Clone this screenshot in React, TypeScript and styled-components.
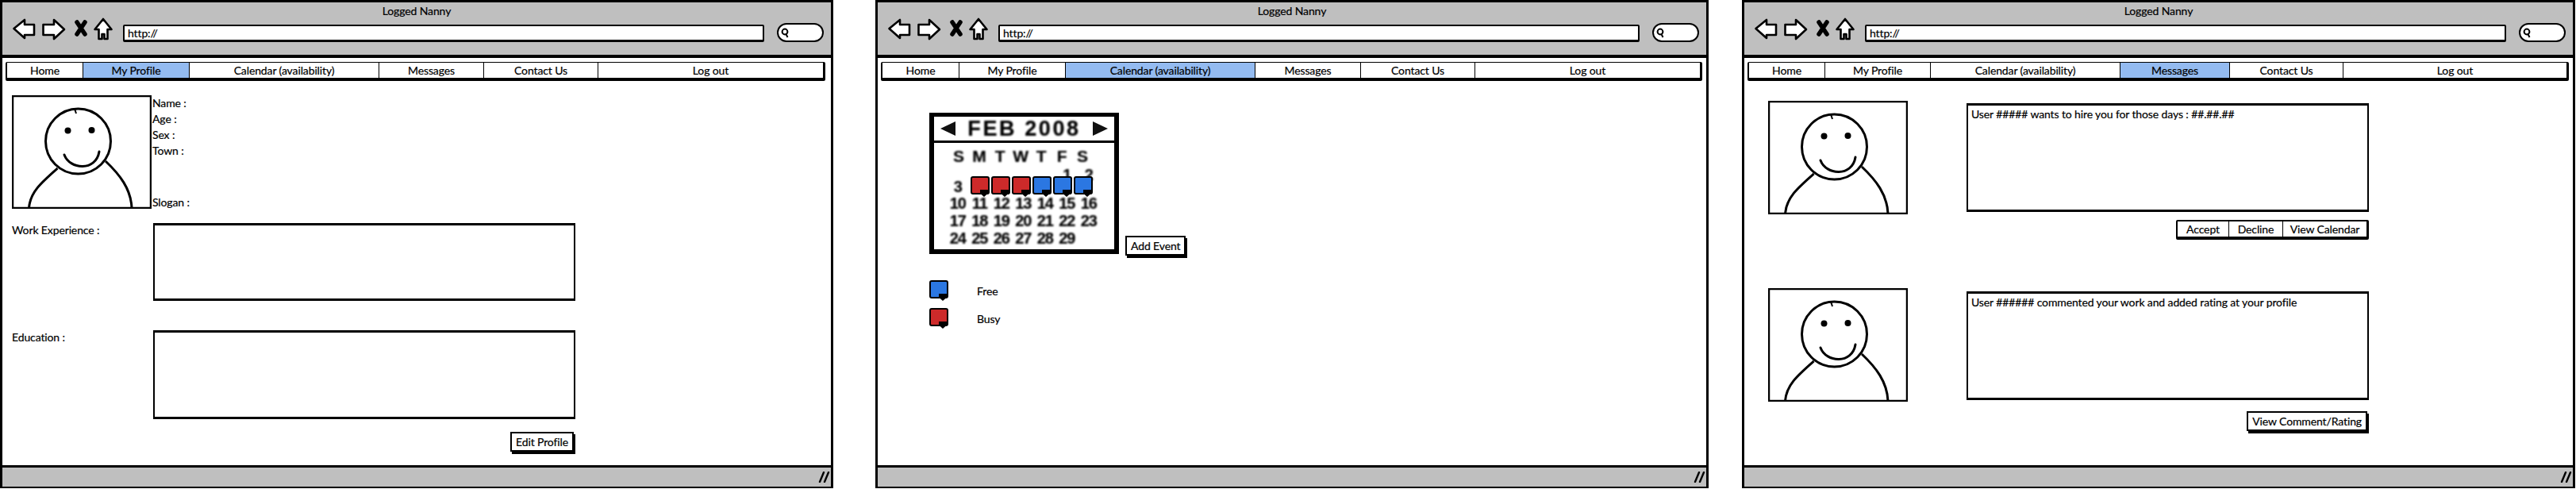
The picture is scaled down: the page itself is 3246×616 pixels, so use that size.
import React from 'react';
import styled, { createGlobalStyle } from 'styled-components';

const GlobalStyle = createGlobalStyle`
  html, body {
    margin: 0;
    padding: 0;
    background: #fff;
    overflow: hidden;
  }
  body {
    font-family: Lato, "Open Sans", sans-serif;
    font-size: 14px;
    letter-spacing: -0.12px;
    -webkit-text-stroke: 0.2px #000;
    color: #000;
  }
`;

const Page = styled.div`
  display: flex;
  width: 3246px;
  height: 616px;
  background: #fff;
`;

const Frame = styled.section<{ $shift: number }>`
  display: flex;
  flex-direction: column;
  flex: none;
  box-sizing: border-box;
  width: 1050px;
  height: 615px;
  margin-left: ${p => p.$shift}px;
  border: 3px solid #000;
  border-bottom-width: 2px;
`;

const TitleBar = styled.header`
  flex: none;
  box-sizing: border-box;
  height: 70px;
  background: #bfbfbf;
  border-bottom: 4px solid #000;
`;

const WindowTitle = styled.div`
  height: 21px;
  line-height: 22px;
  text-align: center;
`;

const Toolbar = styled.div`
  display: flex;
  align-items: flex-start;
  height: 30px;
  padding-left: 13px;
`;

const NavGlyphs = styled.svg`
  flex: none;
  width: 128px;
  height: 30px;
  margin: -2px 11px 0 0;
`;

const UrlBar = styled.div`
  flex: none;
  box-sizing: border-box;
  width: 808px;
  height: 22px;
  margin-top: 7px;
  padding-left: 4px;
  line-height: 18px;
  background: #fff;
  border: 2px solid #000;
  border-bottom-width: 3px;
  border-radius: 2px;
`;

const SearchBox = styled.div`
  flex: none;
  display: flex;
  align-items: center;
  box-sizing: border-box;
  width: 59px;
  height: 24px;
  margin: 5px 0 0 16px;
  padding-left: 3px;
  background: #fff;
  border: 2px solid #000;
  border-radius: 12px;
`;

const Menu = styled.nav<{ $cols: string; $width: number }>`
  flex: none;
  display: grid;
  grid-template-columns: ${p => p.$cols};
  box-sizing: border-box;
  width: ${p => p.$width}px;
  height: 24px;
  margin: 5px 0 0 4px;
  border: 2px solid #000;
  border-top-width: 1px;
  border-bottom-width: 4px;
  border-right-width: 3px;
  border-radius: 2px;
`;

const MenuItem = styled.div<{ $active?: boolean }>`
  display: flex;
  align-items: center;
  justify-content: center;
  box-sizing: border-box;
  border-right: 1px solid #000;
  background: ${p => (p.$active ? '#94bbf0' : '#fff')};
  &:last-child {
    border-right: 0;
  }
`;

const Content = styled.main`
  flex: 1;
  min-height: 0;
`;

const ProfileContent = styled(Content)`
  width: 710px;
  padding: 18px 0 0 12px;
`;

const ProfileTop = styled.div`
  display: flex;
  height: 143px;
  margin-bottom: 18px;
`;

const Picture = styled.svg`
  flex: none;
  display: block;
  width: 176px;
  height: 143px;
`;

const Facts = styled.div`
  display: flex;
  flex-direction: column;
  height: 145px;
  margin-left: 1px;
  line-height: 20px;
`;

const Slogan = styled.div`
  margin-top: auto;
`;

const FormRow = styled.div<{ $gap?: number }>`
  display: flex;
  margin-bottom: ${p => p.$gap ?? 0}px;
`;

const FormLabel = styled.div`
  flex: none;
  width: 178px;
`;

const TextArea = styled.div<{ $height: number }>`
  box-sizing: border-box;
  width: 532px;
  height: ${p => p.$height}px;
  border: 2px solid #000;
  border-top-width: 3px;
  border-bottom-width: 3px;
`;

const PushRight = styled.div<{ $top: number }>`
  display: flex;
  justify-content: flex-end;
  margin-top: ${p => p.$top}px;
`;

const Button = styled.div`
  box-sizing: border-box;
  height: 25px;
  padding: 0 5px;
  line-height: 21px;
  margin: 0 2px 3px 0;
  background: #fff;
  border: 2px solid #000;
  box-shadow: 2px 3px 0 #000;
  white-space: nowrap;
`;

const CalendarContent = styled(Content)`
  padding: 40px 0 0 65px;
`;

const CalendarRow = styled.div`
  display: flex;
  align-items: flex-end;
`;

const CalendarCard = styled.div`
  position: relative;
  flex: none;
  box-sizing: border-box;
  width: 239px;
  height: 178px;
  border: 6px solid #000;
  border-top-width: 5px;
`;

const MonthBar = styled.div`
  display: flex;
  align-items: center;
  justify-content: space-between;
  box-sizing: border-box;
  height: 33px;
  padding: 0 8px;
  border-bottom: 3px solid #000;
`;

const MonthName = styled.div`
  font: 700 27px/30px "Liberation Sans", sans-serif;
  letter-spacing: 2.6px;
  filter: blur(0.8px);
  white-space: nowrap;
`;

const WeekDays = styled.div`
  display: grid;
  grid-template-columns: repeat(7, 26px);
  justify-items: center;
  margin: 4px 0 0 18px;
  font: 700 21px/26px "Liberation Sans", sans-serif;
  filter: blur(0.8px);
`;

const Dates = styled.div`
  display: grid;
  grid-template-columns: repeat(7, 27.5px);
  grid-template-rows: 14.5px repeat(4, 21.8px);
  justify-items: center;
  margin-left: 16px;
  font: 700 20px/21px "Liberation Sans", sans-serif;
  letter-spacing: -1px;
  filter: blur(0.8px);
`;

const StatusRow = styled.div`
  position: absolute;
  left: 46px;
  top: 75px;
  display: flex;
  gap: 2px;
`;

const StatusSquare = styled.div<{ $color: string }>`
  position: relative;
  flex: none;
  box-sizing: border-box;
  width: 24px;
  height: 23px;
  background: ${p => p.$color};
  border: 2px solid #000;
  border-radius: 3px;
  &::after {
    content: '';
    position: absolute;
    left: 10px;
    bottom: -5px;
    width: 10px;
    height: 9px;
    background: #000;
    clip-path: polygon(0 0, 100% 0, 100% 50%, 50% 100%, 0 50%);
  }
`;

const AddEvent = styled(Button)`
  margin: 0 0 -2px 8px;
`;

const Legend = styled.div`
  display: flex;
  flex-direction: column;
  gap: 12px;
  margin-top: 33px;
`;

const LegendRow = styled.div`
  display: flex;
  align-items: center;
  gap: 36px;
`;

const LegendLabel = styled.span`
  margin-top: 3px;
`;

const MessagesContent = styled(Content)`
  padding: 25px 0 0 30px;
`;

const MessageRow = styled.article`
  display: flex;
  gap: 74px;
  height: 236px;
`;

const MessageColumn = styled.div<{ $top: number }>`
  width: 507px;
  padding-top: ${p => p.$top}px;
`;

const MessageBox = styled.div`
  box-sizing: border-box;
  height: 137px;
  padding: 1px 4px;
  line-height: 20px;
  border: 2px solid #000;
  border-top-width: 3px;
  border-bottom-width: 3px;
`;

const ButtonGroup = styled.div`
  display: flex;
  box-sizing: border-box;
  height: 25px;
  border: 2px solid #000;
  border-bottom-width: 4px;
  border-right-width: 3px;
  border-radius: 2px;
`;

const GroupItem = styled.div<{ $width: number }>`
  box-sizing: border-box;
  width: ${p => p.$width}px;
  line-height: 19px;
  text-align: center;
  border-right: 1px solid #000;
  &:last-child {
    border-right: 0;
  }
`;

const StatusBar = styled.footer`
  flex: none;
  display: flex;
  align-items: center;
  justify-content: flex-end;
  box-sizing: border-box;
  height: 27px;
  background: #bfbfbf;
  border-top: 3px solid #000;
  padding-right: 1px;
`;

const Grip = styled.svg`
  display: block;
  width: 15px;
  height: 14px;
`;

const BLUE = '#2b77e2';
const RED = '#cd2a2a';

function Avatar() {
  return (
    <Picture viewBox="0 0 176 143">
      <rect x="1" y="1" width="174" height="141" fill="#fff" stroke="#000" strokeWidth="2.5" />
      <circle cx="83.5" cy="58" r="41" fill="none" stroke="#000" strokeWidth="3" />
      <path d="M79 17 l2 6" fill="none" stroke="#000" strokeWidth="2" />
      <circle cx="70.5" cy="44.5" r="4" fill="#000" />
      <circle cx="100.5" cy="44" r="4" fill="#000" />
      <path d="M66 75 C73 94 106 96 110 71" fill="none" stroke="#000" strokeWidth="3" strokeLinecap="round" />
      <path d="M57.5 92 C37 110 23 122 21.5 142 M118 83 C136 100 150 118 151 142" fill="none" stroke="#000" strokeWidth="3" />
    </Picture>
  );
}

function WindowChrome({
  shift,
  cols,
  width,
  active,
  children,
}: {
  shift: number;
  cols: string;
  width: number;
  active: string;
  children: React.ReactNode;
}) {
  const items = ['Home', 'My Profile', 'Calendar (availability)', 'Messages', 'Contact Us', 'Log out'];
  return (
    <Frame $shift={shift}>
      <TitleBar>
        <WindowTitle>Logged Nanny</WindowTitle>
        <Toolbar>
          <NavGlyphs viewBox="16 22 128 30">
            <g fill="#fff" stroke="#000" strokeWidth="2.6" strokeLinejoin="round">
              <path d="M17.5 36 L31 25 L31 31 L43 31 L43 44 L31 44 L31 48 Z" />
              <path d="M54.5 31 L68 31 L68 25 L81 37 L68 49 L68 44 L54.5 44 Z" />
              <path d="M130 24 L140.5 37 L135.5 37 L135.5 49 L131.5 49 L131.5 43 L128.5 43 L128.5 49 L124.5 49 L124.5 37 L119.5 37 Z" />
            </g>
            <path d="M97 28 L107 43 M107 28 L97 43" fill="none" stroke="#000" strokeWidth="5.5" strokeLinecap="round" />
          </NavGlyphs>
          <UrlBar>http://</UrlBar>
          <SearchBox>
            <svg width="10" height="14" viewBox="0 0 10 14">
              <circle cx="5" cy="6" r="3.4" fill="none" stroke="#000" strokeWidth="2" />
              <path d="M6.5 9 L8.5 13" stroke="#000" strokeWidth="2" />
            </svg>
          </SearchBox>
        </Toolbar>
      </TitleBar>
      <Menu $cols={cols} $width={width}>
        {items.map(label => (
          <MenuItem key={label} $active={label === active}>
            {label}
          </MenuItem>
        ))}
      </Menu>
      {children}
      <StatusBar>
        <Grip viewBox="0 0 15 14">
          <path d="M7 1 L2 13 M13 1 L8 13" fill="none" stroke="#000" strokeWidth="2.4" strokeLinecap="round" />
        </Grip>
      </StatusBar>
    </Frame>
  );
}

function Calendar() {
  const days = ['S', 'M', 'T', 'W', 'T', 'F', 'S'];
  // 4 to 9 sit under the status squares, so those cells stay empty
  const cells: (number | null)[] = [null, null, null, null, null, 1, 2, 3, null, null, null, null, null, null];
  for (let d = 10; d <= 29; d++) cells.push(d);
  return (
    <CalendarCard>
      <MonthBar>
        <svg width="20" height="18" viewBox="0 0 20 18">
          <path d="M0 9 L19 0 L19 18 Z" fill="#111" />
        </svg>
        <MonthName>FEB 2008</MonthName>
        <svg width="20" height="18" viewBox="0 0 20 18">
          <path d="M20 9 L1 0 L1 18 Z" fill="#111" />
        </svg>
      </MonthBar>
      <WeekDays>
        {days.map((d, i) => (
          <span key={i}>{d}</span>
        ))}
      </WeekDays>
      <Dates>
        {cells.map((d, i) => (
          <span key={i}>{d}</span>
        ))}
      </Dates>
      <StatusRow>
        {[RED, RED, RED, BLUE, BLUE, BLUE].map((c, i) => (
          <StatusSquare key={i} $color={c} />
        ))}
      </StatusRow>
    </CalendarCard>
  );
}

export default function App() {
  return (
    <>
      <GlobalStyle />
      <Page>
        <WindowChrome shift={0} width={1033} cols="96px 134px 239px 132px 144px 1fr" active="My Profile">
          <ProfileContent>
            <ProfileTop>
              <Avatar />
              <Facts>
                <div>Name :</div>
                <div>Age :</div>
                <div>Sex :</div>
                <div>Town :</div>
                <Slogan>Slogan :</Slogan>
              </Facts>
            </ProfileTop>
            <FormRow $gap={37}>
              <FormLabel>Work Experience :</FormLabel>
              <TextArea $height={98} />
            </FormRow>
            <FormRow>
              <FormLabel>Education :</FormLabel>
              <TextArea $height={112} />
            </FormRow>
            <PushRight $top={16}>
              <Button>Edit Profile</Button>
            </PushRight>
          </ProfileContent>
        </WindowChrome>

        <WindowChrome shift={53} width={1035} cols="97px 134px 239px 133px 144px 1fr" active="Calendar (availability)">
          <CalendarContent>
            <CalendarRow>
              <Calendar />
              <AddEvent>Add Event</AddEvent>
            </CalendarRow>
            <Legend>
              <LegendRow>
                <StatusSquare $color={BLUE} />
                <LegendLabel>Free</LegendLabel>
              </LegendRow>
              <LegendRow>
                <StatusSquare $color={RED} />
                <LegendLabel>Busy</LegendLabel>
              </LegendRow>
            </Legend>
          </CalendarContent>
        </WindowChrome>

        <WindowChrome shift={42} width={1035} cols="96px 133px 239px 138px 143px 1fr" active="Messages">
          <MessagesContent>
            <MessageRow>
              <Avatar />
              <MessageColumn $top={3}>
                <MessageBox>User ##### wants to hire you for those days : ##.##.##</MessageBox>
                <PushRight $top={10}>
                  <ButtonGroup>
                    <GroupItem $width={65}>Accept</GroupItem>
                    <GroupItem $width={68}>Decline</GroupItem>
                    <GroupItem $width={105}>View Calendar</GroupItem>
                  </ButtonGroup>
                </PushRight>
              </MessageColumn>
            </MessageRow>
            <MessageRow>
              <Avatar />
              <MessageColumn $top={4}>
                <MessageBox>User ###### commented your work and added rating at your profile</MessageBox>
                <PushRight $top={14}>
                  <Button>View Comment/Rating</Button>
                </PushRight>
              </MessageColumn>
            </MessageRow>
          </MessagesContent>
        </WindowChrome>
      </Page>
    </>
  );
}
